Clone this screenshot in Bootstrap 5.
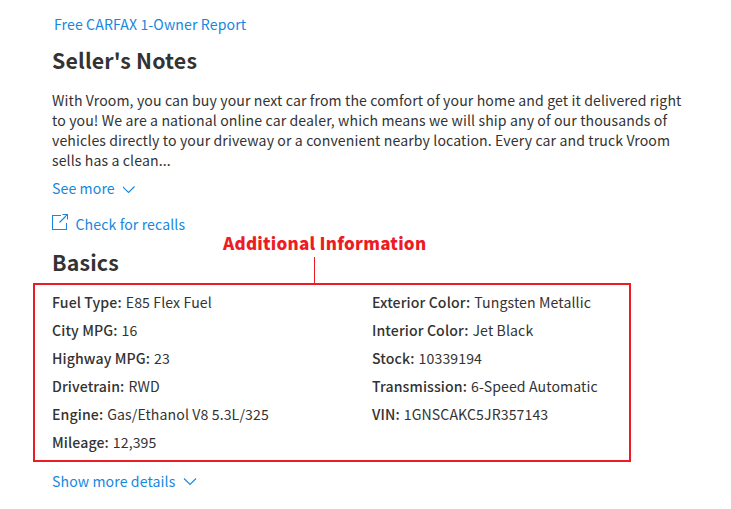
<!DOCTYPE html>
<html lang="en">
<head>
<meta charset="utf-8">
<meta name="viewport" content="width=device-width, initial-scale=1">
<title>Vehicle details</title>
<link href="https://cdn.jsdelivr.net/npm/bootstrap@5.3.0/dist/css/bootstrap.min.css" rel="stylesheet">
<style>
body{font-family:"Source Sans Pro","Noto Sans CJK SC",sans-serif;font-size:14.1px;letter-spacing:.11px;line-height:20px;color:#333;background:#fff;overflow:hidden}
.listing{width:731px;height:509px;padding-top:14px}
.inset{margin-left:52px}
a{color:#1787e0;text-decoration:none}
.report-link{padding-left:2px}
.title{font-size:21.3px;letter-spacing:.17px;line-height:32px;font-weight:700;margin-bottom:0}
.notes-title{margin-top:10px}
.notes{margin-top:14px;margin-bottom:8px;white-space:nowrap}
.recalls{margin-top:16px;gap:7.500px}
.basics-title{margin-top:12px}
.spec-frame{margin:5px 0 9px 33px;width:598px;height:179px;border:2px solid #ed1c24;padding:3px 0 0 17px}
.spec-frame dl{width:320px;flex:none}
.spec-frame dl>div{height:28px;line-height:28px;white-space:nowrap}
.spec-frame dt{font-weight:500}
.callout{left:223px;top:232px;font-family:"Segoe UI","Noto Sans CJK SC",sans-serif;font-size:17px;letter-spacing:.24px;font-weight:900;line-height:22px;color:#ed1c24;white-space:nowrap}
.callout-line{left:314px;top:257px;width:1px;height:27px;background:#ed1c24}
svg{fill:none;stroke:#1787e0;stroke-width:1.1;flex:none}
</style>
<script src="https://cdn.jsdelivr.net/npm/bootstrap@5.3.0/dist/js/bootstrap.bundle.min.js"></script>
</head>
<body>
<main class="listing position-relative">
<div class="inset"><a href="#" class="report-link d-block">Free CARFAX 1-Owner Report</a></div>
<h2 class="title notes-title inset">Seller's Notes</h2>
<p class="notes inset">With Vroom, you can buy your next car from the comfort of your home and get it delivered right<br>to you! We are a national online car dealer, which means we will ship any of our thousands of<br>vehicles directly to your driveway or a convenient nearby location. Every car and truck Vroom<br>sells has a clean...</p>
<a href="#" class="inset d-flex"><span>See more</span><svg class="ms-2" width="13" height="20"><path d="M-.5 8.500l6 6 6-6"/></svg></a>
<a href="#" class="recalls inset d-flex"><svg width="16" height="20"><path d="M9 1.500H.5v14h14V9M10.500 .5h5v5M15.500 .5L7.500 8.500"/></svg><span>Check for recalls</span></a>
<h2 class="title basics-title inset">Basics</h2>
<section class="spec-frame d-flex">
<dl class="mb-0">
<div class="d-flex gap-1"><dt>Fuel Type:</dt><dd>E85 Flex Fuel</dd></div>
<div class="d-flex gap-1"><dt>City MPG:</dt><dd>16</dd></div>
<div class="d-flex gap-1"><dt>Highway MPG:</dt><dd>23</dd></div>
<div class="d-flex gap-1"><dt>Drivetrain:</dt><dd>RWD</dd></div>
<div class="d-flex gap-1"><dt>Engine:</dt><dd>Gas/Ethanol V8 5.3L/325</dd></div>
<div class="d-flex gap-1"><dt>Mileage:</dt><dd>12,395</dd></div>
</dl>
<dl class="mb-0">
<div class="d-flex gap-1"><dt>Exterior Color:</dt><dd>Tungsten Metallic</dd></div>
<div class="d-flex gap-1"><dt>Interior Color:</dt><dd>Jet Black</dd></div>
<div class="d-flex gap-1"><dt>Stock:</dt><dd>10339194</dd></div>
<div class="d-flex gap-1"><dt>Transmission:</dt><dd>6-Speed Automatic</dd></div>
<div class="d-flex gap-1"><dt>VIN:</dt><dd>1GNSCAKC5JR357143</dd></div>
</dl>
</section>
<a href="#" class="inset d-flex"><span>Show more details</span><svg class="ms-2" width="15" height="20"><path d="M1 7.500l6 6 6-6"/></svg></a>
<div class="callout position-absolute">Additional Information</div>
<div class="callout-line position-absolute"></div>
</main>
</body>
</html>
